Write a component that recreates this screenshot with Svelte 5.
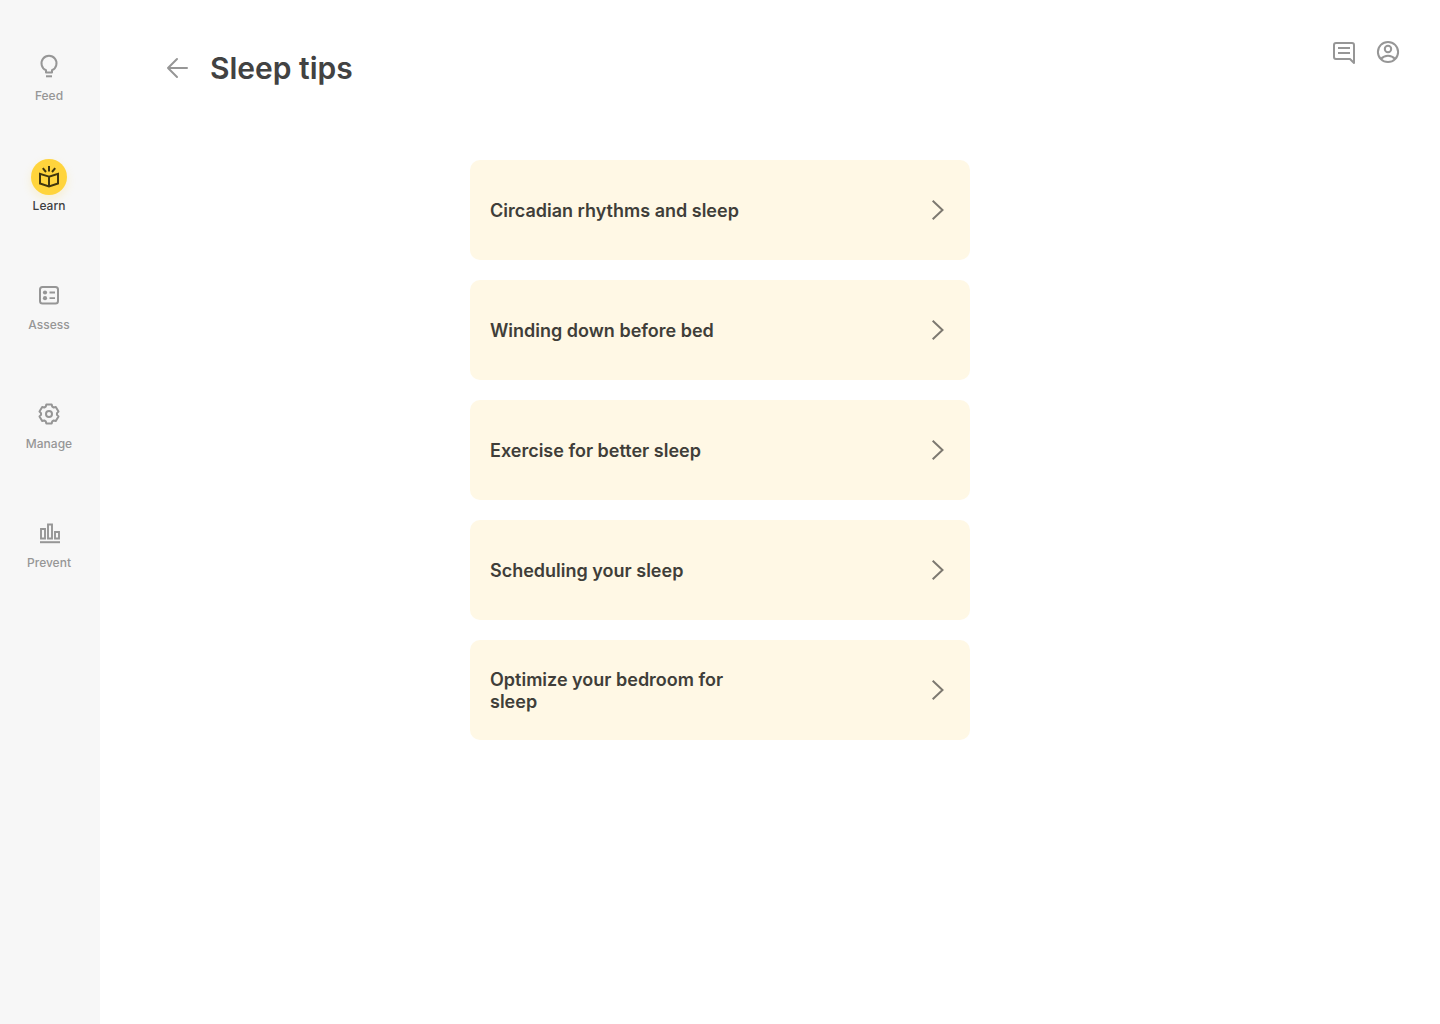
<script>
  const nav = [
    { id: 'feed', label: 'Feed' },
    { id: 'learn', label: 'Learn' },
    { id: 'assess', label: 'Assess' },
    { id: 'manage', label: 'Manage' },
    { id: 'prevent', label: 'Prevent' }
  ];
  const tips = [
    'Circadian rhythms and sleep',
    'Winding down before bed',
    'Exercise for better sleep',
    'Scheduling your sleep',
    'Optimize your bedroom for sleep'
  ];
  let active = $state('learn');
</script>

<div class="app">
  <nav class="sidebar" aria-label="Main">
    {#each nav as item (item.id)}
      <button
        class="item"
        class:active={active === item.id}
        aria-current={active === item.id ? 'page' : undefined}
        onclick={() => (active = item.id)}
      >
        <span class="icon">
          <svg width="24" height="24" viewBox="0 0 24 24" fill="none" stroke="currentColor" stroke-width="2" aria-hidden="true">
            {#if item.id === 'feed'}
              <path d="M9 18.500v-2.300A7.500 7.500 0 1 1 15 16.200v2.300z" stroke-linejoin="round" />
              <path d="M9 22.300h6" />
            {:else if item.id === 'learn'}
              <path d="M12 11.600 3 8.900v9.600l9 3 9-3V8.900zM12 11.600v9.900M12 1v5.500M5.800 3.200l3.200 3.800M18.200 3.200l-3.200 3.800" />
            {:else if item.id === 'assess'}
              <rect x="3" y="4" width="18" height="16.500" rx="2.500" />
              <path d="M12.500 9.500h5.500M12.500 15.200h5.500" stroke-width="1.800" />
              <circle cx="8" cy="9.500" r="2.100" fill="currentColor" stroke="none" />
              <circle cx="8" cy="15.200" r="2.100" fill="currentColor" stroke="none" />
            {:else if item.id === 'manage'}
              <path
                d="M8.750 4.700 9.300 2.600h5.400l.55 2.100 1.450.8 2.100-.55 2.700 4.650-1.540 1.560v1.680l1.540 1.560-2.700 4.650-2.100-.55-1.450.8-.55 2.100H9.300l-.55-2.100-1.450-.8-2.100.55L2.500 14.400l1.540-1.560v-1.680L2.500 9.600l2.700-4.650 2.100.55z"
                stroke-linejoin="round"
              />
              <circle cx="12" cy="12" r="3" />
            {:else}
              <path d="M4 8h4v9.500H4zM11 3.500h4v14h-4zM18 11h4v6.500h-4z" stroke-width="1.900" />
              <path d="M3 21.200h20" />
            {/if}
          </svg>
        </span>
        <span class="label">{item.label}</span>
      </button>
    {/each}
  </nav>

  <main>
    <header>
      <div class="heading">
        <button class="plain" aria-label="Back">
          <svg width="24" height="24" viewBox="0 0 24 24" fill="none" stroke="currentColor" stroke-width="2" stroke-linecap="round" stroke-linejoin="round">
            <path d="M22 12H3M12 3l-9 9 9 9" />
          </svg>
        </button>
        <h1>Sleep tips</h1>
      </div>
      <div class="actions">
        <button class="plain" aria-label="Messages">
          <svg width="24" height="24" viewBox="0 0 24 24" fill="none" stroke="currentColor" stroke-width="2" stroke-linejoin="round">
            <path d="M22 23l-4-4H4a2 2 0 0 1-2-2V5a2 2 0 0 1 2-2h16a2 2 0 0 1 2 2z" />
            <path d="M6 8h12M6 13h12" />
          </svg>
        </button>
        <button class="plain" aria-label="Profile">
          <svg width="24" height="24" viewBox="0 0 24 24" fill="none" stroke="currentColor" stroke-width="2">
            <circle cx="12" cy="12" r="10.100" />
            <circle cx="12" cy="9" r="3.200" />
            <path d="M4.800 19c4-4.400 10.400-4.400 14.400 0" />
          </svg>
        </button>
      </div>
    </header>

    <ul class="tips">
      {#each tips as tip}
        <li>
          <button class="card">
            <span class="title">{tip}</span>
            <svg width="24" height="24" viewBox="0 0 24 24" fill="none" stroke="currentColor" stroke-width="2" aria-hidden="true">
              <path d="M6.700 2.700 16.500 12l-9.800 9.300" />
            </svg>
          </button>
        </li>
      {/each}
    </ul>
  </main>
</div>

<style>
  :global(body) {
    background: #fff;
  }
  .app {
    display: flex;
    min-height: 100vh;
    font-family: Inter, 'Liberation Sans', sans-serif;
  }
  button {
    border: 0;
    padding: 0;
    margin: 0;
    background: none;
    font: inherit;
    color: inherit;
    cursor: pointer;
  }
  svg {
    display: block;
  }
  .sidebar {
    display: flex;
    flex-direction: column;
    align-items: center;
    gap: 69px;
    flex: 0 0 100px;
    box-sizing: border-box;
    padding: 54px 2px 54px 0;
    background: #f7f7f7;
  }
  .item {
    display: flex;
    flex-direction: column;
    align-items: center;
    gap: 10px;
    color: #969696;
  }
  .label {
    font-size: 12px;
    line-height: 16px;
    font-weight: 500;
  }
  .active {
    gap: 3px;
    margin-top: -14px;
    color: #3f3f3f;
  }
  .active .icon {
    display: grid;
    place-items: center;
    width: 36px;
    height: 36px;
    border-radius: 50%;
    background: #ffd43c;
    color: #40360f;
    box-shadow: 0 4px 10px rgba(255, 212, 60, 0.2);
  }
  main {
    flex: 1;
    min-width: 0;
  }
  header {
    display: flex;
    justify-content: space-between;
    align-items: flex-start;
    padding: 40px 40px 0 65px;
  }
  .heading {
    display: flex;
    align-items: center;
    gap: 21px;
    padding-top: 8px;
  }
  .plain {
    color: #969696;
  }
  .actions {
    display: flex;
    gap: 20px;
  }
  h1 {
    margin: 0;
    font-size: 30px;
    line-height: 40px;
    font-weight: 600;
    color: #424242;
  }
  .tips {
    display: grid;
    gap: 20px;
    max-width: 500px;
    margin: 72px auto 40px;
    padding: 0 100px 0 0;
    list-style: none;
  }
  .card {
    display: flex;
    align-items: center;
    justify-content: space-between;
    width: 100%;
    min-height: 100px;
    padding: 20px;
    border-radius: 10px;
    background: #fff8e5;
    color: #7d7970;
    text-align: left;
  }
  .title {
    max-width: 250px;
    padding-top: 2px;
    font-size: 18px;
    line-height: 22px;
    font-weight: 600;
    color: #403e39;
  }
</style>
